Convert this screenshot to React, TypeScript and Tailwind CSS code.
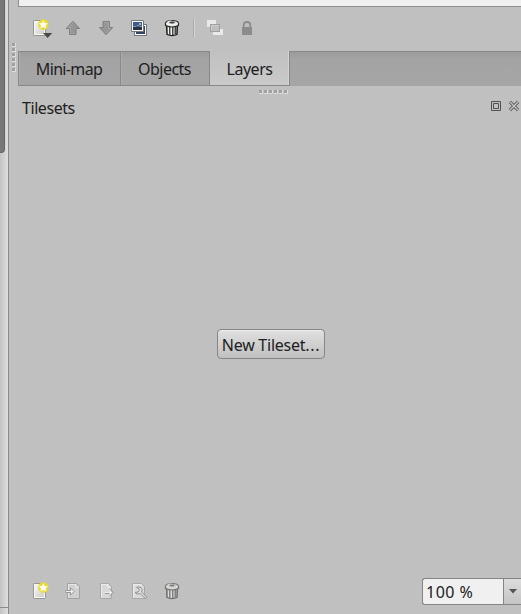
import React from 'react';

type IconProps = { children: React.ReactNode; className?: string };

function Icon({ children, className = '' }: IconProps) {
  return (
    <svg viewBox="0 0 24 24" className={`h-6 w-6 shrink-0 ${className}`}>
      {children}
    </svg>
  );
}

function NewIcon({ menu = false }: { menu?: boolean }) {
  return (
    <Icon>
      <rect x="4.5" y="4.5" width="12" height="15" rx="0.8" fill="#dcdcd7" stroke="#969696" />
      <rect x="5.5" y="5.5" width="10" height="13" fill="url(#paper)" stroke="#f7f7f5" />
      <circle cx="14.3" cy="8.5" r="5.2" fill="#ecdb2c" />
      <path d="M14.3 4.4l1.4 2.5 3 .4-2.1 2.1.5 3.1-2.8-1.4-2.8 1.4.5-3.1-2.1-2.1 3-.4z" fill="#fffff8" />
      {menu && <path d="M14 17h9.2l-4.6 5z" fill="#484848" />}
      <defs>
        <linearGradient id="paper" x1="0" y1="0" x2="1" y2="1">
          <stop offset="0" stopColor="#f5f5f2" />
          <stop offset="1" stopColor="#cfcfc9" />
        </linearGradient>
      </defs>
    </Icon>
  );
}

function ArrowIcon({ down = false }: { down?: boolean }) {
  return (
    <Icon className={down ? 'rotate-180' : ''}>
      <path d="M12 5.3l6.5 7.2H15v6H8.5v-6H5.2z" fill="#969696" stroke="#7f7f7f" />
      <path d="M12 6.9L7.6 11.5h1.9v6h4.4" fill="none" stroke="#a5a5a5" />
    </Icon>
  );
}

function DuplicateIcon() {
  return (
    <Icon>
      <rect x="7.5" y="8.5" width="12" height="11" fill="#fbfbfb" stroke="#747878" />
      <rect x="9" y="10" width="9" height="8" fill="#314466" />
      <rect x="4.5" y="4.5" width="12" height="11" rx="0.5" fill="#fbfbfb" stroke="#747878" />
      <rect x="6" y="6" width="9" height="8" fill="#3e5c8b" />
      <rect x="6" y="11" width="9" height="3" fill="#293344" />
      <path d="M6 10.5h3l1-1h2l1 1h2" fill="none" stroke="#7c94af" />
      <rect x="12" y="7" width="2" height="2" fill="#afb5a7" />
    </Icon>
  );
}

function TrashIcon({ disabled = false }: { disabled?: boolean }) {
  return (
    <Icon className={disabled ? 'opacity-50' : ''}>
      <path d="M6.5 9l.5 9.5q5 2 10 0l.5-9.5z" fill="#9c9f9b" stroke="#1c1f1c" strokeWidth="1.3" />
      <path d="M9.5 11v7.5M12.5 11v8M15.5 11v7" stroke="#424542" />
      <path d="M8.5 11v7M11.5 11v8" stroke="#f4f4f1" />
      <path d="M5.5 7q.5-2.5 6.5-2.5T18.5 7v2.5Q12 12.5 5.5 9.5z" fill="#dededa" stroke="#292d29" strokeWidth="1.2" />
      <path d="M6.5 7.5q5.5 3.2 11 0M7.5 6q2-1 4-1" fill="none" stroke="#fff" />
      <ellipse cx="12" cy="6.6" rx="2.7" ry="1" fill="#3c403b" />
    </Icon>
  );
}

function StackIcon() {
  return (
    <Icon>
      <rect x="4" y="4" width="9" height="7" fill="#e9e9e9" />
      <rect x="10" y="13" width="10" height="6" fill="#e9e9e9" />
      <rect x="7.5" y="8.5" width="9" height="7" fill="#bebebe" stroke="#a0a0a0" />
      <path d="M8.5 14.5v-5h7" fill="none" stroke="#cccccc" />
    </Icon>
  );
}

function LockIcon() {
  return (
    <Icon>
      <path d="M8.7 11V9.2q0-3.2 3.3-3.2t3.3 3.2V11" fill="none" stroke="#8c8c8c" strokeWidth="1.8" />
      <rect x="7" y="11" width="10" height="8" rx="0.3" fill="#8c8c8c" />
    </Icon>
  );
}

function PageIcon({ kind }: { kind: 'import' | 'export' | 'edit' }) {
  return (
    <Icon>
      {kind === 'import' && (
        <>
          <path d="M6.5 4.5h9l3 3v12h-12z" fill="#d0d0d0" stroke="#a2a2a2" />
          <path d="M7.5 18.5v-13h7M14.5 5v3.5H18" fill="none" stroke="#e5e5e5" />
          <path d="M4.5 12.5h6" stroke="#999" strokeWidth="3" />
          <path d="M9.5 8.8l3.7 3.7-3.7 3.7z" fill="#ededed" stroke="#999" />
          <path d="M5 12.5h6" stroke="#eee" />
        </>
      )}
      {kind === 'export' && (
        <>
          <path d="M6.5 4.5h8l3 3v12h-11z" fill="#d8d8d8" stroke="#a8a8a8" />
          <path d="M7.5 18.5v-13h6M13.5 5v3.5H17" fill="none" stroke="#ececec" />
          <path d="M11 14.5h5M15.5 9.8l4 3.7-4 3.7" fill="none" stroke="#999" />
          <path d="M15.5 10.8l2.8 2.7-2.8 2.7z" fill="#e8e8e8" />
          <path d="M11 13.5h7" stroke="#eee" />
        </>
      )}
      {kind === 'edit' && (
        <>
          <path d="M5.5 4.5h9l3 3v12h-12z" fill="#dadada" stroke="#a8a8a8" />
          <path d="M6.5 18.5v-13h8" fill="none" stroke="#ececec" />
          <path d="M9.5 8.5q2.5-1.5 4.8.3 1.6 1.7.4 4.2l5.2 5.5-1.5 1-5-4.8q-3.6 1.2-5.4-1.2l3-.5 1.3-1.7-.5-2z" fill="#dedede" stroke="#939393" />
        </>
      )}
    </Icon>
  );
}

function Grip({ vertical = false }: { vertical?: boolean }) {
  return (
    <div className={vertical ? 'flex flex-col gap-px' : 'flex gap-px'}>
      {[0, 1, 2, 3, 4, 5].map((dot) => (
        <span key={dot} className="h-1 w-1 border-r border-b border-[#dddddd] bg-[#a0a0a0]" />
      ))}
    </div>
  );
}

export default function App() {
  return (
    <div className="flex h-[614px] w-[521px] overflow-hidden bg-[#c0c0c0] font-['Noto_Sans',sans-serif] text-[16px] text-[#202020]">
      <aside className="flex w-[9px] shrink-0 flex-col border-r border-[#8b8b8b] bg-linear-to-r from-[#c3c3c3] to-[#dedede]">
        <div className="h-[153px] w-[5px] rounded-br-[4px] border-r border-b border-[#666666] bg-[#777777]" />
        <div className="flex-1" />
        <div className="h-[7px] border-t border-[#8b8b8b]" />
      </aside>
      <main className="flex min-w-0 flex-1 flex-col">
        <div className="flex h-[86px]">
          <div className="w-[9px] shrink-0 pt-[43px] pl-[3px]"><Grip vertical /></div>
          <div className="flex min-w-0 flex-1 flex-col">
            <div className="h-[7px] shrink-0 border-b border-l border-[#8e8e8e] bg-[#f0f0f0]" />
            <div className="flex h-[44px] items-start gap-[9px] pt-[9px] pl-[11px]">
              <NewIcon menu />
              <div className="-ml-px"><ArrowIcon /></div>
              <ArrowIcon down />
              <DuplicateIcon />
              <TrashIcon />
              <span className="mt-[3px] h-[19px] w-[2px] border-r border-l border-r-[#d5d5d5] border-l-[#aaaaaa]" />
              <div className="-ml-px"><StackIcon /></div>
              <div className="-ml-px"><LockIcon /></div>
            </div>
            <div className="flex h-[35px] border-t border-[#878787] bg-linear-to-b from-[#9b9b9b] via-[#a4a4a4] via-20% to-[#a5a5a5]">
              <div className="flex w-[103px] items-center justify-center border-r border-b border-l border-[#888888] shadow-[inset_1px_0_#adadad]">
                <span className="-ml-px tracking-[-0.65px]">Mini-map</span>
              </div>
              <div className="flex w-[89px] items-center justify-center border-r border-b border-[#888888] shadow-[inset_1px_0_#adadad]">
                <span className="-ml-px tracking-[-0.55px]">Objects</span>
              </div>
              <div className="-mt-px flex w-[80px] items-center justify-center border-r border-b border-[#888888] bg-linear-to-b from-[#c0c0c0] to-[#cacaca] pt-px shadow-[inset_-1px_0_#d4d4d4]">
                <span className="tracking-[-0.49px]">Layers</span>
              </div>
            </div>
          </div>
        </div>
        <div className="flex h-[10px] justify-center pt-1 pl-[16px]"><Grip /></div>
        <header className="flex h-[24px] items-center justify-between pr-[2px] pl-[13px]">
          <span className="tracking-[-0.44px]">Tilesets</span>
          <div className="-mt-[5px] flex gap-[8px]">
            <svg viewBox="0 0 10 10" className="h-[10px] w-[10px]">
              <path d="M.5.5h9v9h-9zM2.5 2.5h5v5h-5z" fill="none" stroke="#505050" />
            </svg>
            <svg viewBox="0 0 10 10" className="h-[10px] w-[10px] overflow-visible">
              <path d="M.9.9l8.2 8.2M9.1.9L.9 9.1" stroke="#585858" strokeWidth="3.2" />
              <path d="M1 1l8 8M9 1L1 9" stroke="#c8c8c8" strokeWidth="1.3" />
            </svg>
          </div>
        </header>
        <section className="flex flex-1 justify-center pt-[209px] pl-[12px]">
          <button className="flex h-[30px] w-[108px] items-center justify-center rounded-[4px] border border-[#858585] bg-linear-to-b from-[#e0e0e0] to-[#c0c0c0] pt-px shadow-[inset_0_1px_#eeeeee]">
            <span className="tracking-[-0.25px] whitespace-nowrap">New Tileset<span className="tracking-[0.7px]">...</span></span>
          </button>
        </section>
        <footer className="flex h-[36px] items-start justify-between pl-[20px]">
          <div className="flex gap-[9px] pt-px">
            <NewIcon />
            <div className="-ml-px"><PageIcon kind="import" /></div>
            <PageIcon kind="export" />
            <PageIcon kind="edit" />
            <TrashIcon disabled />
          </div>
          <div className="flex h-[27px] w-[99px] rounded-l-[3px] border border-r-0 border-[#858585] bg-[#f0f0f0]">
            <span className="flex flex-1 items-center pl-[3px] tracking-[0.5px]">100 %</span>
            <span className="flex w-[18px] items-center justify-center border-l border-[#858585] bg-linear-to-b from-[#dddddd] to-[#c4c4c4]">
              <svg viewBox="0 0 8 5" className="h-[5px] w-2"><path d="M0 0h8L4 4.5z" fill="#555" /></svg>
            </span>
          </div>
        </footer>
      </main>
    </div>
  );
}
